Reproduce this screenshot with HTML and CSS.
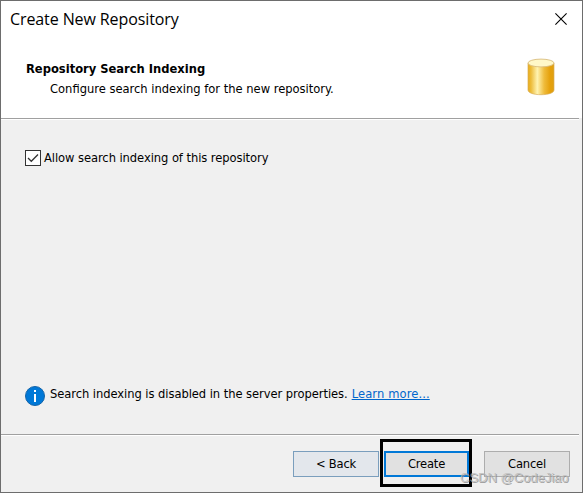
FILE: index.html
```
<!DOCTYPE html>
<html lang="en">
<head>
<meta charset="utf-8">
<title>Create New Repository</title>
<link rel="stylesheet" href="styles.css">
</head>
<body>
<div class="dialog">
  <header class="header">
    <div class="titlebar">
      <h1 class="title">Create New Repository</h1>
      <svg class="close" width="12" height="12" viewBox="0 0 12 12"><path d="M.4.4 11.6 11.6M11.6.4.4 11.6" stroke="#000" stroke-width="1.1"/></svg>
    </div>
    <div class="banner">
      <div class="banner-text">
        <h2 class="heading">Repository Search Indexing</h2>
        <p class="subtitle">Configure search indexing for the new repository.</p>
      </div>
      <svg class="db" width="28" height="38" viewBox="0 0 28 38">
        <defs><linearGradient id="gold"><stop offset="0" stop-color="#e8ac18"/><stop offset=".12" stop-color="#edbd3c"/><stop offset=".36" stop-color="#fff3b0"/><stop offset=".62" stop-color="#efbc3c"/><stop offset=".85" stop-color="#e5a00a"/><stop offset="1" stop-color="#e0a010"/></linearGradient></defs>
        <path d="M1 5v27c0 2.800 5.500 4.700 13 4.700s13-1.900 13-4.700V5z" fill="url(#gold)" stroke="#d8ad58" stroke-width=".7"/>
        <ellipse cx="14" cy="5" rx="13" ry="3.900" fill="#fff8c8" stroke="#d9bd80" stroke-width=".9"/>
      </svg>
    </div>
  </header>
  <main class="content">
    <div class="option">
      <span class="checkbox"><svg width="14" height="14" viewBox="0 0 14 14"><path d="m2 7 3.300 3.300L12 3.500" fill="none" stroke="#333" stroke-width="1.300"/></svg></span>
      <span class="option-label">Allow search indexing of this repository</span>
    </div>
    <div class="notice">
      <svg width="20" height="20" viewBox="0 0 20 20"><circle cx="10" cy="10" r="9.500" fill="#0078d7" stroke="#1464a8"/><path d="M9 4h2v2H9zM9 8h2v8H9z" fill="#fff"/></svg>
      <p class="notice-text"><span class="message">Search indexing is disabled in the server properties.</span><a class="link">Learn more...</a></p>
    </div>
  </main>
  <footer class="footer">
    <button class="button back">&lt; Back</button>
    <div class="primary"><button class="button create">Create</button></div>
    <button class="button cancel">Cancel</button>
  </footer>
  <div class="watermark">CSDN @CodeJiao</div>
</div>
</body>
</html>
```
FILE: styles.css
```
* { box-sizing: border-box; }
body { margin: 0; }
.dialog {
  position: relative;
  display: flex;
  flex-direction: column;
  width: 583px;
  height: 493px;
  border: 1px solid #6d6d6d;
  background: #f0f0f0;
  color: #000;
  font: 12.8px/16px "DejaVu Sans Condensed", "DejaVu Sans", sans-serif;
  white-space: nowrap;
  overflow: hidden;
}
h1, h2, p { margin: 0; }
.header { height: 117px; background: #fff; }
.titlebar { display: flex; justify-content: space-between; padding: 6px 15px 0 9px; height: 56px; }
.title { font: 16px/24px "Open Sans", sans-serif; letter-spacing: -.1px; }
.close { margin-top: 6px; }
.banner { display: flex; justify-content: space-between; padding: 1px 27px 0 25px; }
.banner-text { padding-top: 3px; }
.heading { font-size: 12.8px; line-height: 16px; }
.subtitle { padding: 4px 0 0 24px; }
.content {
  display: flex;
  flex-direction: column;
  justify-content: space-between;
  height: 317px;
  margin-right: 3px;
  padding: 31px 0 28px 24px;
  border: solid #a0a0a0;
  border-width: 1px 0;
  box-shadow: inset 0 1px #fff, 0 1px #fff;
}
.option { display: flex; align-items: center; gap: 3px; }
.option-label { letter-spacing: -.06px; }
.checkbox { display: flex; width: 16px; height: 16px; border: 1px solid #333; background: #fff; }
.notice { display: flex; gap: 5px; }
.notice-text { display: flex; gap: 4px; }
.message { letter-spacing: -.05px; }
.link { color: #0066cc; text-decoration: underline; letter-spacing: .12px; }
.footer { display: flex; align-items: flex-start; padding: 4px 0 0 292px; }
.button {
  width: 86px;
  height: 26px;
  padding: 0;
  border: 1px solid #adadad;
  background: #e1e1e1;
  color: #000;
  font: inherit;
  letter-spacing: -.2px;
}
.back { margin-top: 12px; border-color: #7a9ebd; background: #e3e7ec; }
.primary { width: 92px; height: 48px; margin-left: 1px; padding: 9px 0 0 1px; border: 3px solid #000; }
.create { width: 85px; border: 2px solid #0078d7; }
.cancel { margin: 12px 0 0 12px; }
.watermark {
  position: absolute;
  left: 459px;
  top: 468px;
  color: #b8b8b8;
  font: 13px/18px "Liberation Sans", sans-serif;
  text-shadow: 1px 1px #888;
  opacity: .75;
}
```
